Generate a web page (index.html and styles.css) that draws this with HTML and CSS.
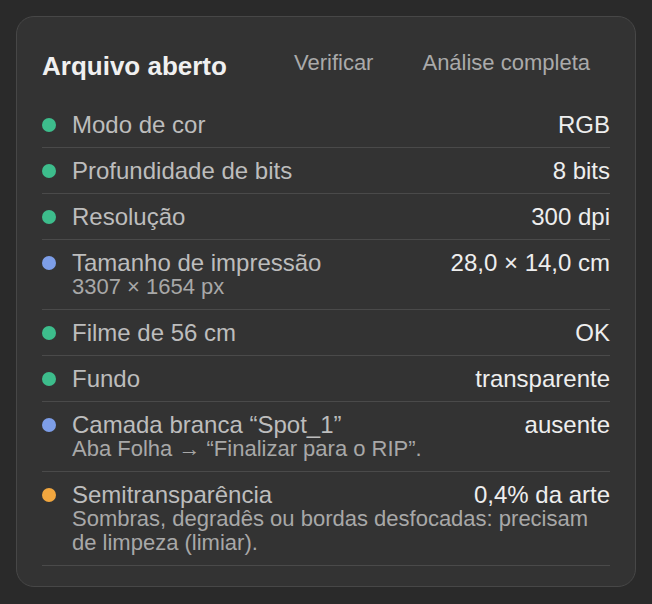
FILE: index.html
```html
<!DOCTYPE html>
<html lang="pt">
<head>
    <meta charset="UTF-8">
    <meta name="viewport" content="width=device-width, initial-scale=1.0">
    <title>Arquivo aberto</title>
    <link rel="stylesheet" href="styles.css">
</head>
<body>
    <div class="card">
        <div class="card-header">
            <h2>Arquivo aberto</h2>
            <div class="tabs">
                <button class="tab">Verificar</button>
                <button class="tab">Análise completa</button>
            </div>
        </div>

        <ul class="checks">
            <li class="check">
                <span class="dot ok"></span>
                <div class="info">
                    <div class="line"><span class="label">Modo de cor</span><span class="value">RGB</span></div>
                </div>
            </li>
            <li class="check">
                <span class="dot ok"></span>
                <div class="info">
                    <div class="line"><span class="label">Profundidade de bits</span><span class="value">8 bits</span></div>
                </div>
            </li>
            <li class="check">
                <span class="dot ok"></span>
                <div class="info">
                    <div class="line"><span class="label">Resolução</span><span class="value">300 dpi</span></div>
                </div>
            </li>
            <li class="check">
                <span class="dot info-dot"></span>
                <div class="info">
                    <div class="line"><span class="label">Tamanho de impressão</span><span class="value">28,0 × 14,0 cm</span></div>
                    <div class="note">3307 × 1654 px</div>
                </div>
            </li>
            <li class="check">
                <span class="dot ok"></span>
                <div class="info">
                    <div class="line"><span class="label">Filme de 56 cm</span><span class="value">OK</span></div>
                </div>
            </li>
            <li class="check">
                <span class="dot ok"></span>
                <div class="info">
                    <div class="line"><span class="label">Fundo</span><span class="value">transparente</span></div>
                </div>
            </li>
            <li class="check">
                <span class="dot info-dot"></span>
                <div class="info">
                    <div class="line"><span class="label">Camada branca “Spot_1”</span><span class="value">ausente</span></div>
                    <div class="note">Aba Folha → “Finalizar para o RIP”.</div>
                </div>
            </li>
            <li class="check">
                <span class="dot warn"></span>
                <div class="info">
                    <div class="line"><span class="label">Semitransparência</span><span class="value">0,4% da arte</span></div>
                    <div class="note">Sombras, degradês ou bordas desfocadas: precisam de limpeza (limiar).</div>
                </div>
            </li>
        </ul>
    </div>
</body>
</html>
```

FILE: styles.css
```css
body {
    font-family: "Liberation Sans", Arial, sans-serif;
    background-color: #2a2a2a;
    margin: 0;
    padding: 16px;
}

.card {
    background: #333333;
    border: 1px solid #474747;
    border-radius: 18px;
    padding: 24px 25px 20px 25px;
}

.card-header {
    display: flex;
    justify-content: space-between;
    align-items: center;
    height: 50px;
    margin-bottom: 11px;
}

.card-header h2 {
    margin: 0;
    font-size: 26px;
    font-weight: bold;
    color: #f0f0f0;
}

.tabs {
    display: flex;
    gap: 9px;
    padding-bottom: 6px;
}

.tab {
    font-family: inherit;
    font-size: 22px;
    color: #aaaaaa;
    background: none;
    border: none;
    padding: 0 20px;
    cursor: pointer;
}

.checks {
    list-style: none;
    margin: 0;
    padding: 0;
}

.check {
    display: flex;
    align-items: flex-start;
    padding: 10px 0;
    border-bottom: 1px solid #4a4a4a;
}

.dot {
    flex: none;
    width: 14px;
    height: 14px;
    border-radius: 50%;
    margin-top: 6px;
    margin-right: 16px;
}

.dot.ok {
    background-color: #3dbd8c;
}

.dot.info-dot {
    background-color: #7d9ee8;
}

.dot.warn {
    background-color: #f2a73f;
}

.info {
    flex: 1;
}

.line {
    display: flex;
    justify-content: space-between;
    font-size: 24px;
    line-height: 25px;
}

.label {
    color: #bdbdbd;
}

.value {
    color: #eeeeee;
    white-space: nowrap;
}

.note {
    font-size: 22px;
    line-height: 24px;
    color: #a8a8a8;
}
```
